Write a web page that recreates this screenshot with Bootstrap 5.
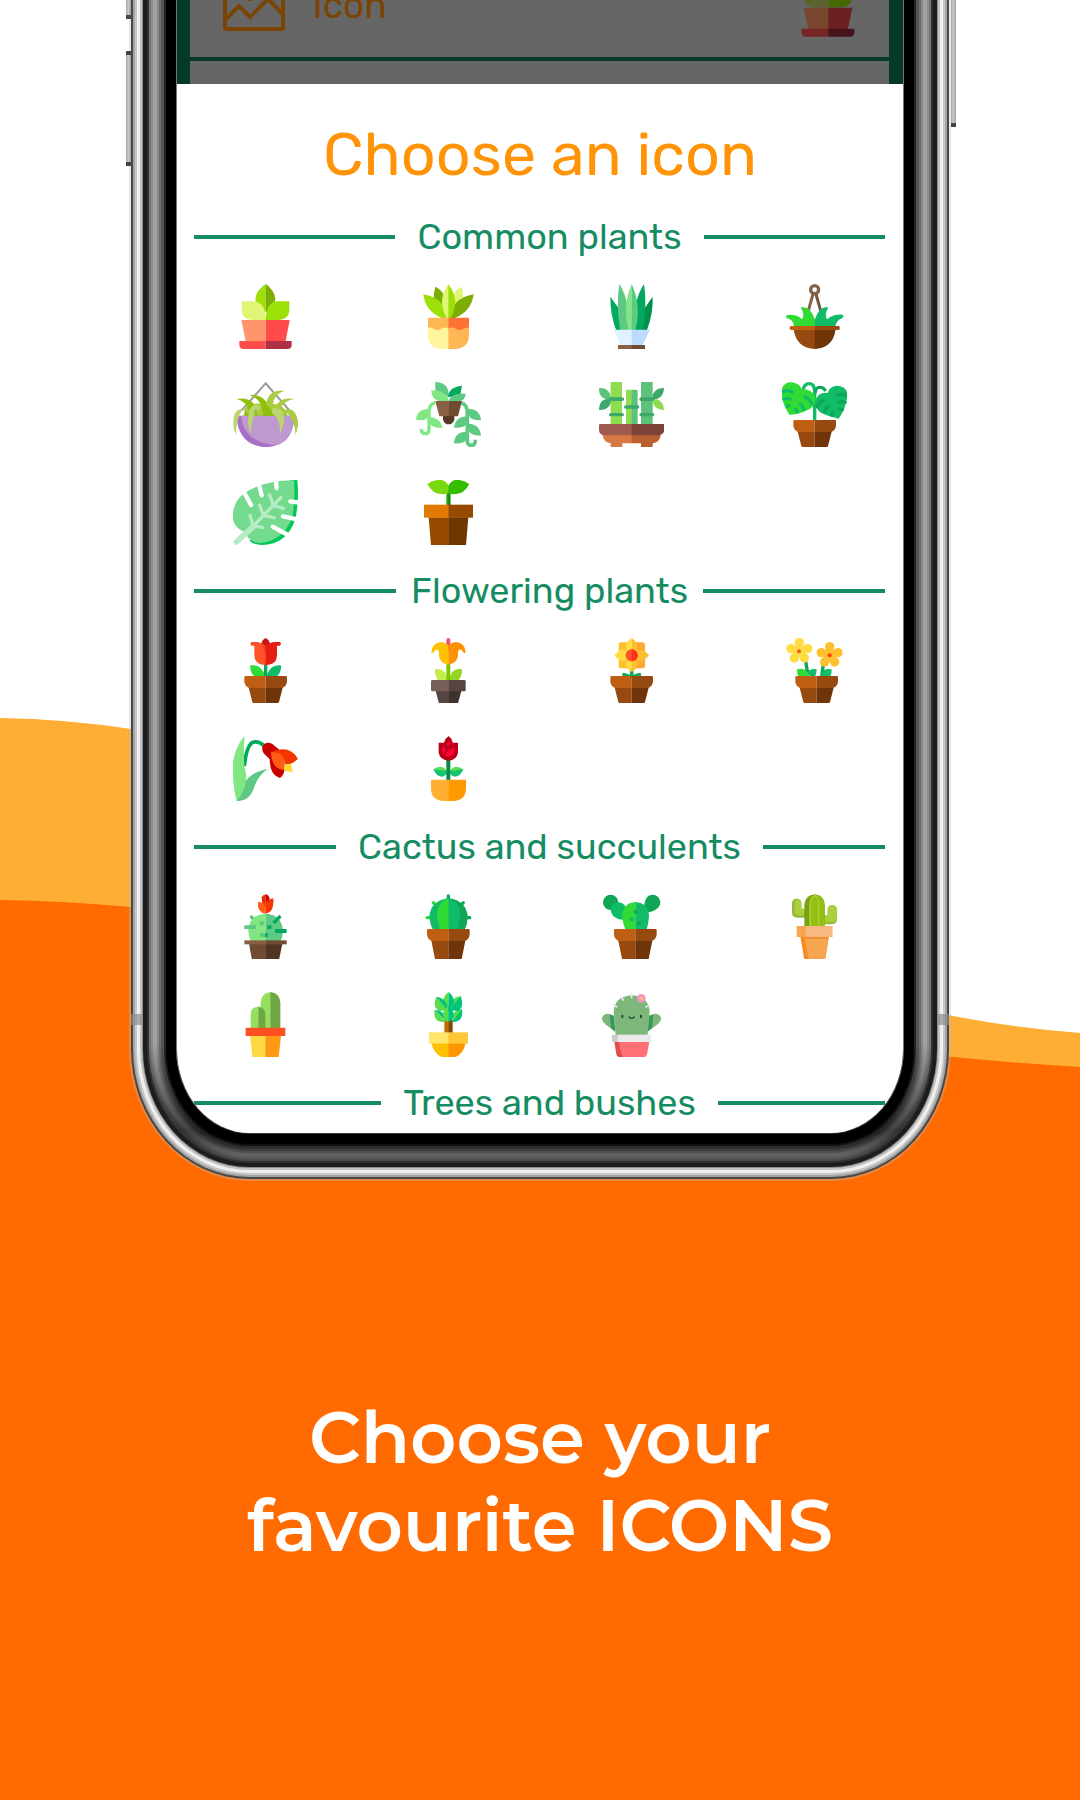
<!DOCTYPE html>
<html lang="en">
<head>
<meta charset="utf-8">
<meta name="viewport" content="width=device-width, initial-scale=1">
<title>Choose your favourite icons</title>
<link href="https://cdn.jsdelivr.net/npm/bootstrap@5.3.0/dist/css/bootstrap.min.css" rel="stylesheet">
<style>
  body { font-family: Rubik, Roboto, "Liberation Sans", sans-serif; background: #fff; }
  .promo { min-height: 1800px; overflow: hidden; }
  .waves { top: 0; left: 0; width: 100%; height: 1200px; z-index: 0; }
  .promo-floor { top: 1199px; bottom: 0; left: 0; right: 0; background: #ff6b00; z-index: 0; }
  .phone {
    width: 67.3%; border-radius: 0 0 72px 72px / 0 0 84px 84px; z-index: 1;
    box-shadow: 0 0 0 1px #777, 0 0 0 11px #000, 0 0 0 13px #222, 0 0 0 16px #555, 0 0 0 18px #6e6e6e,
      0 0 0 20px #888, 0 0 0 24px #a2a2a2, 0 0 0 26px #8c8c8c, 0 0 0 28px #777, 0 0 0 30px #303030,
      0 0 0 34px #1d1d1d, 0 0 0 35px #8c8c8c, 0 0 0 37px #c4c4c4, 0 0 0 40px #f0f0f0,
      0 0 0 42px #c8c8c8, 0 0 0 44px #a4a4a4, 0 0 0 46px #484848, 0 0 0 48px rgba(190,190,190,.35);
  }
  /* shade on the lower curve of the case */
  .phone::after {
    content: ""; position: absolute; z-index: -1; left: -28px; right: -28px; bottom: -28px; height: 120px;
    border-radius: 0 0 100px 100px / 0 0 112px 112px;
    background: linear-gradient(rgba(0,0,0,0), rgba(0,0,0,.6) 75%, rgba(0,0,0,.35));
  }
  .phone-screen { border-radius: inherit; background: #fff; overflow: hidden; }
  .side-key { width: 5px; background: linear-gradient(90deg, #a8a8a8, #c9c9c9 50%, #9a9a9a); border-bottom: 4px solid #444; top: 0; }
  .key-mute { left: -51px; height: 19px; }
  .key-volume { left: -51px; height: 115px; top: 51px; border-top: 4px solid #444; }
  .key-power { right: -53px; height: 127px; }
  .antenna { width: 12px; height: 11px; top: 1014px; background: rgba(140,140,140,.7); }
  .antenna-left { left: -46px; }
  .antenna-right { right: -46px; }
  .backdrop-page { height: 84px; background: #666; border-left: 13px solid #053a2a; border-right: 14px solid #053a2a; }
  .field-row { height: 61px; border-bottom: 4px solid #053a2a; padding: 0 33px 20px; }
  .field-image { margin-bottom: 6px; }
  .field-name { color: #7a4503; font-size: 37px; line-height: 36px; padding-bottom: 14px; }
  .next-row { height: 23px; }
  .sheet { padding: 34px 0 8px; }
  .sheet-title { color: #ff9408; font-size: 61px; line-height: 72px; font-weight: 400; margin-bottom: 25px; }
  .group-head { padding: 0 18px 0 17px; }
  .group-head::before, .group-head::after { content: ""; height: 4px; background: #168c62; flex: 1 1 20px; }
  .group-head::after { flex-basis: 0; }
  .group-name { color: #168c62; font-size: 36px; line-height: 44px; font-weight: 400; padding: 0 22px; }
  .group-name-snug { padding: 0 15px; }
  .icon-row { --bs-gutter-x: 4px; padding: 8px 0; }
  .icon-cell { height: 98px; }
  .icon-cell .btn { line-height: 0; }
  .icon-cell svg { width: 65px; height: 65px; }
  .slogan { padding: 260px 24px 0; z-index: 1; }
  .slogan h2 { font-family: Montserrat, Inter, "Open Sans", sans-serif; font-weight: 600; color: #fff; font-size: 72px; line-height: 88px; }
</style>
</head>
<body>
<svg width="0" height="0" class="position-absolute" aria-hidden="true">
  <defs>
    <g id="clay">
      <path fill="#964a0f" d="M-51 35H0V81H-36Q-39 81-40 78Z"/><path fill="#6f3509" d="M51 35H0V81H36Q39 81 40 78Z"/>
      <path fill="#bf5f13" d="M-64 4Q-64 0-60 0H0V36H-50Q-64 30-64 16Z"/><path fill="#964a0f" d="M64 4Q64 0 60 0H0V36H50Q64 30 64 16Z"/>
    </g>
    <g id="clay-tall">
      <path fill="#964a0f" d="M-51 35H0V93H-36Q-39 93-40 90Z"/><path fill="#6f3509" d="M51 35H0V93H36Q39 93 40 90Z"/>
      <path fill="#bf5f13" d="M-64 4Q-64 0-60 0H0V36H-50Q-64 30-64 16Z"/><path fill="#964a0f" d="M64 4Q64 0 60 0H0V36H50Q64 30 64 16Z"/>
    </g>
    <g id="bloom"><circle cx="0" cy="-25" r="14"/><circle cx="25" cy="-7" r="14"/><circle cx="15" cy="21" r="14"/><circle cx="-15" cy="21" r="14"/><circle cx="-25" cy="-7" r="14"/><circle r="20"/></g>
  </defs>
</svg>
<main class="promo position-relative">
  <svg class="waves position-absolute" viewBox="0 0 1080 1200" preserveAspectRatio="none" aria-hidden="true">
    <path fill="#ffae35" d="M0 718Q66 719 131 729C420 770 640 950 953 1016Q1015 1028 1080 1033V1200H0Z"/>
    <path fill="#ff6b00" d="M0 900Q66 901 131 907C420 930 640 1020 953 1057Q1015 1063 1080 1067V1200H0Z"/>
  </svg>
  <div class="promo-floor position-absolute"></div>

  <section class="phone position-relative mx-auto">
    <span class="side-key key-mute position-absolute"></span>
    <span class="side-key key-volume position-absolute"></span>
    <span class="side-key key-power position-absolute"></span>
    <span class="antenna antenna-left position-absolute"></span>
    <span class="antenna antenna-right position-absolute"></span>
    <div class="phone-screen">
      <div class="backdrop-page d-flex flex-column justify-content-end overflow-hidden">
        <div class="field-row d-flex align-items-end flex-shrink-0">
          <svg class="field-image flex-shrink-0" width="62" height="62" viewBox="0 0 62 62" fill="none" stroke="#7a4503" stroke-width="4" aria-hidden="true"><rect x="2" y="2" width="58" height="58" rx="1"/><path d="M2 51L16 37L27 48L45 30L60 45"/><circle cx="27" cy="25" r="5"/></svg>
          <span class="field-name ps-4 ms-1 me-auto">Icon</span>
          <svg class="flex-shrink-0" width="56" height="66" viewBox="172 42 167 195" aria-hidden="true"><path fill="#3f5903" d="M256 42Q225 62 225 90L240 125H256Z"/><path fill="#314502" d="M256 42Q285 62 285 90L272 125H256Z"/><path fill="#5a622e" d="M184 94H222Q256 98 256 150H215Q184 148 184 118Z"/><path fill="#456803" d="M327 94H290Q256 98 256 150H296Q327 148 327 118Z"/><path fill="#78452f" d="M183 151H256V214H197Z"/><path fill="#6c2022" d="M328 151H256V214H315Z"/><path fill="#762424" d="M177 213H256V237H190Q177 237 177 226Z"/><path fill="#48141c" d="M334 213H256V237H321Q334 237 334 226Z"/></svg>
        </div>
        <div class="next-row flex-shrink-0"></div>
      </div>

      <div class="sheet">
        <h1 class="sheet-title text-center">Choose an icon</h1>

        <div class="group-head d-flex align-items-center"><h2 class="group-name m-0">Common plants</h2></div>
        <div class="row icon-row">
          <div class="col-3 icon-cell d-flex align-items-center justify-content-center"><button type="button" class="btn p-0 border-0" aria-label="Potted succulent">
            <svg viewBox="158 42 195 195"><path fill="#9ddf08" d="M256 42Q225 62 225 90L240 125H256Z"/><path fill="#7bad04" d="M256 42Q285 62 285 90L272 125H256Z"/><path fill="#e0f573" d="M184 94H222Q256 98 256 150H215Q184 148 184 118Z"/><path fill="#9ddf08" d="M327 94H290Q256 98 256 150H296Q327 148 327 118Z"/><path fill="#ff946d" d="M183 150H256V214H196Z"/><path fill="#ff4b4b" d="M328 150H256V214H316Z"/><path fill="#ff4b4b" d="M177 213H256V237H190Q177 237 177 224Z"/><path fill="#b03044" d="M334 213H256V237H321Q334 237 334 224Z"/></svg></button></div>
          <div class="col-3 icon-cell d-flex align-items-center justify-content-center"><button type="button" class="btn p-0 border-0" aria-label="Agave in a pot">
            <svg viewBox="708 42 195 195"><path fill="#7bad04" d="M766 50Q792 62 796 90L784 105L762 88Q760 68 766 50Z"/><path fill="#e0f573" d="M845 50Q820 62 815 90L828 105L849 80Q850 64 845 50Z"/><path fill="#9ddf08" d="M730 73Q798 86 802 144H785Q736 124 730 73Z"/><path fill="#7bad04" d="M881 73Q814 86 808 144H825Q874 124 881 73Z"/><path fill="#e0f573" d="M805 42Q770 90 800 144H806Z"/><path fill="#9ddf08" d="M805 42Q842 90 812 144H805Z"/><path fill="#fff59e" d="M744 170H806V237H785Q744 234 744 194Z"/><path fill="#ffb655" d="M867 170H805V237H826Q867 234 867 194Z"/><path fill="#ffb655" d="M744 143H806V175Q796 170 787 175Q775 184 764 178Q756 172 744 172Z"/><path fill="#ff7236" d="M867 143H805V175Q815 170 824 175Q838 184 847 178Q856 172 867 173Z"/></svg></button></div>
          <div class="col-3 icon-cell d-flex align-items-center justify-content-center"><button type="button" class="btn p-0 border-0" aria-label="Snake plant">
            <svg viewBox="147 42 195 195"><path fill="#00a95e" d="M181 80L204 112L225 180H198Q180 130 181 80Z"/><path fill="#008f4c" d="M308 80L286 112L265 180H291Q310 130 308 80Z"/><path fill="#5dc983" d="M208 42Q240 90 236 180H210Q198 100 208 42Z"/><path fill="#00a95e" d="M282 42Q250 90 250 180H278Q292 100 282 42Z"/><path fill="#80e783" d="M245 42Q216 110 236 180H246Z"/><path fill="#5dc983" d="M245 42Q276 110 256 180H245Z"/><path fill="#e0f2ff" d="M191 179H246V226H212Z"/><path fill="#bbdbff" d="M300 179H245V226H277Z"/><path fill="#8a6044" d="M204 225H246V237H204Z"/><path fill="#6f4b31" d="M285 225H245V237H285Z"/></svg></button></div>
          <div class="col-3 icon-cell d-flex align-items-center justify-content-center"><button type="button" class="btn p-0 border-0" aria-label="Hanging fern bowl">
            <svg viewBox="697 42 195 195"><path fill="none" stroke="#86644a" stroke-width="9" d="M790 72L774 130"/><path fill="none" stroke="#72573a" stroke-width="9" d="M799 72L815 130"/><circle cx="795" cy="59" r="12" fill="none" stroke="#826047" stroke-width="10"/><path fill="#31da35" d="M712 135Q742 132 757 148Q766 132 754 114Q754 111 758 111Q786 112 796 150V170H734Q730 148 712 145Q706 140 712 135Z"/><path fill="#10bc67" d="M878 134Q850 132 832 148Q824 132 835 114Q835 111 831 111Q806 112 795 150V170H857Q860 150 878 144Q885 139 878 134Z"/><path fill="#964a0f" d="M732 178H796V237Q740 235 732 178Z"/><path fill="#6f3509" d="M858 178H795V237Q850 235 858 178Z"/><rect x="720" y="168" width="150" height="12" rx="5" fill="#bf5f13"/><path fill="#964a0f" d="M795 168H865Q870 168 870 174Q870 180 865 180H795Z"/></svg></button></div>
          <div class="col-3 icon-cell d-flex align-items-center justify-content-center"><button type="button" class="btn p-0 border-0" aria-label="Hanging spider plant">
            <svg viewBox="158 335 195 195"><path fill="none" stroke="#9b9b96" stroke-width="6" d="M183 421L256 339L328 421"/><path fill="#a9cc3d" d="M192 437V415Q205 398 240 400H270Q315 400 322 437Z"/><path fill="#a86fc4" d="M168 436H343Q338 525 256 531Q174 525 168 436Z"/><path fill="#bd99d0" d="M182 436H343Q338 515 285 525Q190 515 182 436Z"/><path fill="#8fbf0c" d="M169 386Q205 380 222 402L205 420Q200 395 169 386Z"/><path fill="#8fbf0c" d="M208 374Q250 370 266 408L282 437H248Q250 390 208 374Z"/><path fill="#aacb44" d="M312 361Q262 356 257 405L275 412Q280 370 312 361Z"/><path fill="#aacb44" d="M342 386Q300 378 284 410L298 418Q310 390 342 386Z"/><path fill="#bbd66f" d="M182 416Q154 420 160 474L167 494Q168 440 187 418Z"/><path fill="#bbd66f" d="M238 408Q204 390 203 460L211 493Q214 425 238 418Z"/><path fill="#bbd66f" d="M276 414Q312 405 312 455L299 491Q300 440 276 430Z"/><path fill="#aacb44" d="M318 416Q350 412 354 462L346 494Q342 440 314 424Z"/><path fill="#93c01f" d="M222 437Q220 418 228 416L232 437ZM190 437L196 418L205 437Z"/></svg></button></div>
          <div class="col-3 icon-cell d-flex align-items-center justify-content-center"><button type="button" class="btn p-0 border-0" aria-label="Trailing vine">
            <svg viewBox="708 335 195 195"><path fill="#5dc983" d="M766 335Q806 336 806 375L790 392L766 360Z"/><path fill="#00a95e" d="M846 346Q806 350 804 380L840 378Z"/><path fill="#80e783" d="M754 360Q800 360 806 392H778Q754 388 754 360Z"/><path fill="#5dc983" d="M857 370Q814 366 806 392H840Q856 388 857 370Z"/><path fill="none" stroke="#80e783" stroke-width="10" d="M766 397Q745 402 747 430V478Q747 490 736 490Q724 490 724 476"/><path fill="#80e783" d="M708 449Q710 416 747 416Q747 449 730 450ZM746 440Q780 440 788 473Q750 475 746 450Z"/><path fill="none" stroke="#5dc983" stroke-width="11" d="M844 398Q864 402 862 435V512Q862 525 874 525Q886 525 886 508"/><path fill="#5dc983" d="M866 416Q900 416 903 450Q866 450 866 430ZM822 472Q826 439 862 438V460Q850 474 822 472ZM866 460Q900 462 903 496Q866 494 866 478ZM822 519Q824 484 860 484V508Q845 522 822 519Z"/><path fill="#553825" d="M789 436H823V448Q818 462 806 462Q794 462 789 448Z"/><path fill="#8a6044" d="M766 392H806V438H778Z"/><path fill="#6f4b31" d="M846 392H805V438H834Z"/></svg></button></div>
          <div class="col-3 icon-cell d-flex align-items-center justify-content-center"><button type="button" class="btn p-0 border-0" aria-label="Lucky bamboo">
            <svg viewBox="147 335 195 195"><path fill="#5cc27b" d="M148 353Q180 350 184 388Q148 388 147 358Q147 353 148 353Z"/><path fill="#3ca86c" d="M147 419Q148 382 184 386Q182 420 147 419ZM342 353Q308 352 306 388Q340 388 342 353Z"/><path fill="#8edc50" d="M342 419Q340 384 306 386Q310 420 342 419Z"/><rect x="182" y="334" width="34" height="130" rx="4" fill="#8edc50"/><rect x="273" y="334" width="35" height="130" rx="4" fill="#5cc27b"/><path fill="#8edc50" d="M228 461V362Q228 358 232 358H246V464Z"/><path fill="#5cc27b" d="M263 461V362Q263 358 259 358H245V464Z"/><g fill="#3ca86c"><rect x="177" y="381" width="45" height="11" rx="5"/><rect x="177" y="428" width="45" height="10" rx="5"/><rect x="222" y="405" width="46" height="10" rx="5"/><rect x="268" y="381" width="45" height="11" rx="5"/><rect x="268" y="428" width="45" height="10" rx="5"/></g><path fill="#d87943" d="M158 494H246V519H217V530H182V519Q160 516 158 494Z"/><path fill="#b96031" d="M332 494H245V519H273V530H308V519Q330 516 332 494Z"/><path fill="#9f5b50" d="M147 465Q147 461 151 461H246V495H162Q147 492 147 478Z"/><path fill="#7d4338" d="M343 465Q343 461 339 461H245V495H328Q343 492 343 478Z"/></svg></button></div>
          <div class="col-3 icon-cell d-flex align-items-center justify-content-center"><button type="button" class="btn p-0 border-0" aria-label="Potted monstera">
            <svg viewBox="697 335 195 195"><path fill="none" stroke="#10bc67" stroke-width="10" d="M795 450V362Q794 340 778 340Q765 340 760 358"/><path fill="none" stroke="#0fa656" stroke-width="9" d="M797 368Q798 351 810 351Q822 351 828 362"/><path fill="#31da35" d="M720 434Q690 390 698 352Q706 334 728 336Q750 340 756 356Q790 356 797 382Q800 404 780 416Q750 432 720 434Z"/><path fill="none" stroke="#10bc67" stroke-width="10" stroke-linecap="round" d="M702 363Q716 358 727 365M703 386Q712 382 721 386M712 408L718 406M767 380Q780 386 786 399M753 402Q760 408 762 418M739 418L742 425"/><path fill="#10bc67" d="M867 445Q892 410 893 370Q888 346 862 346Q838 348 834 368Q806 364 796 392Q796 416 815 428Q840 440 867 445Z"/><path fill="none" stroke="#0fa656" stroke-width="10" stroke-linecap="round" d="M864 375Q877 367 888 375M868 397Q877 392 886 396M871 417L878 418M803 408Q806 397 820 391M825 425Q826 413 836 409M847 435L850 427"/><use href="#clay" x="795" y="449"/></svg></button></div>
          <div class="col-3 icon-cell d-flex align-items-center justify-content-center"><button type="button" class="btn p-0 border-0" aria-label="Monstera leaf">
            <svg viewBox="158 628 195 195"><path fill="#00c95a" d="M330 628H351Q357 690 345 745Q320 822 245 823Q218 822 208 810Z"/><path fill="#74db8e" d="M186 780Q152 765 158 724Q164 690 186 672Q240 630 341 629Q345 690 336 738Q310 812 235 817Q208 812 200 795Z"/><path fill="none" stroke="#fff" stroke-width="13" stroke-linecap="round" d="M194 670L212 703M236 642L244 674M286 624L289 653M357 696L330 692M350 746L308 737M323 793L277 768"/><path fill="none" stroke="#b5ecc3" stroke-width="17" stroke-linecap="round" d="M168 814L222 764"/><path fill="none" stroke="#b5ecc3" stroke-width="10" stroke-linecap="round" d="M215 770L302 680M209 734L218 765L247 771M238 704L249 734L281 741M268 673L279 704L309 713"/></svg></button></div>
          <div class="col-3 icon-cell d-flex align-items-center justify-content-center"><button type="button" class="btn p-0 border-0" aria-label="Seedling">
            <svg viewBox="708 628 195 195"><path fill="#1fae08" d="M799 660H811V706H799Z"/><path fill="#108b00" d="M805 668H811V706H805Z"/><path fill="#7ad80f" d="M742 640Q790 612 806 646V668Q762 680 742 640Z"/><path fill="#35bd00" d="M868 640Q820 612 805 646V668Q848 680 868 640Z"/><path fill="#964a00" d="M746 740H806V824H753Z"/><path fill="#703600" d="M865 740H805V824H858Z"/><path fill="#e27900" d="M732 702H806V741H732Z"/><path fill="#964a00" d="M879 702H805V741H879Z"/></svg></button></div>
        </div>

        <div class="group-head d-flex align-items-center"><h2 class="group-name group-name-snug m-0">Flowering plants</h2></div>
        <div class="row icon-row">
          <div class="col-3 icon-cell d-flex align-items-center justify-content-center"><button type="button" class="btn p-0 border-0" aria-label="Potted tulip">
            <svg viewBox="158 54 195 195"><path fill="#31da35" d="M210 136Q245 132 254 169H222Q208 156 210 136Z"/><path fill="#10bc67" d="M302 136Q268 132 259 169H290Q304 156 302 136Z"/><path fill="#0fa656" d="M251 130H261V169H251Z"/><path fill="#c41a13" d="M242 74Q246 58 256 54Q266 58 270 74V90H242Z"/><path fill="#ff5328" d="M213 66H228Q244 67 256 78V135Q222 134 222 104V77H214Q207 72 213 66Z"/><path fill="#ff3b22" d="M242 71Q252 74 256 82V135L251 134Q260 96 242 71Z"/><path fill="#e71d14" d="M299 66H284Q266 67 256 78V135Q290 134 290 104V77H298Q305 72 299 66Z"/><use href="#clay" x="256" y="168"/></svg></button></div>
          <div class="col-3 icon-cell d-flex align-items-center justify-content-center"><button type="button" class="btn p-0 border-0" aria-label="Potted lily">
            <svg viewBox="708 54 195 195"><path fill="#c6ed48" d="M765 148Q798 142 802 181H774Q764 166 765 148Z"/><path fill="#95d524" d="M846 148Q812 142 808 181H836Q847 166 846 148Z"/><path fill="#78c900" d="M799 130H811V181H799Z"/><rect x="799" y="54" width="12" height="35" rx="6" fill="#ff4d6c"/><path fill="#ffc000" d="M805 76Q790 66 782 66Q754 70 754 98Q760 102 766 90Q774 86 777 96V108Q780 130 805 134Z"/><path fill="#ff9200" d="M805 76Q820 66 829 66Q857 70 857 98Q850 102 845 90Q837 86 834 96V108Q831 130 805 134Z"/><path fill="#554440" d="M767 213H806V250H777Z"/><path fill="#3e312e" d="M844 213H805V250H834Z"/><path fill="#75605a" d="M753 184Q753 180 757 180H806V214H757Q753 214 753 210Z"/><path fill="#554440" d="M857 184Q857 180 853 180H805V214H853Q857 214 857 210Z"/></svg></button></div>
          <div class="col-3 icon-cell d-flex align-items-center justify-content-center"><button type="button" class="btn p-0 border-0" aria-label="Potted daisy">
            <svg viewBox="147 54 195 195"><path fill="none" stroke="#0fa656" stroke-width="11" stroke-linecap="round" d="M245 150V170M222 164L236 169M268 164L254 169"/><g fill="#ffc02e"><rect x="206" y="67" width="36" height="36" rx="8"/><rect x="206" y="109" width="36" height="36" rx="8"/></g><g fill="#ffa834"><rect x="249" y="67" width="36" height="36" rx="8"/><rect x="249" y="109" width="36" height="36" rx="8"/></g><path fill="#ffdc3f" d="M245 54Q228 65 228 82L234 104H246ZM193 106Q205 89 222 89L246 100V112L222 123Q205 122 193 106ZM245 157Q228 146 228 128L246 110Z"/><path fill="#ffc02e" d="M245 54Q262 65 262 82L256 104H245ZM297 106Q285 89 268 89L245 100V112L268 123Q285 122 297 106ZM245 157Q262 146 262 128L245 110Z"/><circle cx="245" cy="106" r="18" fill="#ff5328"/><path fill="#ff2f19" d="M245 88A18 18 0 0 1 245 124Z"/><use href="#clay" x="245" y="168"/></svg></button></div>
          <div class="col-3 icon-cell d-flex align-items-center justify-content-center"><button type="button" class="btn p-0 border-0" aria-label="Potted buttercups">
            <svg viewBox="697 54 195 195"><path fill="none" stroke="#0fa656" stroke-width="10" d="M768 124L775 166M822 128L816 168"/><path fill="#31da35" d="M742 148Q772 140 778 169H746Q741 160 742 148Z"/><path fill="#10bc67" d="M801 148Q780 144 774 158L781 169H796Q802 160 801 148ZM846 148Q816 142 814 169H842Q847 160 846 148Z"/><use href="#bloom" x="749" y="93" fill="#ffdc3f"/><use href="#bloom" x="840" y="105" fill="#ffc02e"/><circle cx="748" cy="94" r="6" fill="#ff5328"/><circle cx="840" cy="106" r="6" fill="#fb3a17"/><use href="#clay" x="801" y="168"/></svg></button></div>
          <div class="col-3 icon-cell d-flex align-items-center justify-content-center"><button type="button" class="btn p-0 border-0" aria-label="Fritillary">
            <svg viewBox="158 348 195 195"><path fill="none" stroke="#00a95e" stroke-width="11" d="M192 438Q198 380 215 368Q232 360 250 376"/><path fill="#80e783" d="M192 348Q150 400 158 470Q160 510 169 543Q200 530 197 460Q190 440 191 400Z"/><path fill="#5dc983" d="M263 446Q215 455 197 482Q194 515 169 543Q210 545 224 495Q235 465 263 446Z"/><path fill="#c80000" d="M246 380Q256 362 276 372L298 390L300 425L314 440Q312 465 299 474Q268 465 268 418L250 400Q244 390 246 380Z"/><path fill="#f53500" d="M276 394Q330 374 353 417L336 430L316 434Q308 402 276 394Z"/><path fill="#ff5d17" d="M272 396Q312 394 314 432V450Q274 450 272 396Z"/><path fill="#ffd62e" d="M312 434L332 431L337 456L311 452Z"/></svg></button></div>
          <div class="col-3 icon-cell d-flex align-items-center justify-content-center"><button type="button" class="btn p-0 border-0" aria-label="Rose in a bowl">
            <svg viewBox="708 348 195 195"><path fill="#5fdc55" d="M760 448Q785 430 802 454L790 462ZM850 448Q825 430 808 454L820 462Z"/><path fill="#10c472" d="M760 448L802 454Q798 470 784 470Q770 470 760 448ZM850 448L808 454Q812 470 826 470Q840 470 850 448Z"/><path fill="#008d42" d="M799 418H811V480H799Z"/><path fill="#bd0019" d="M776 368H792Q795 355 806 348Q816 355 818 368H834V398Q830 420 806 422Q780 420 776 398Z"/><path fill="#ff003c" d="M806 361L812 373Q808 380 799 374ZM787 381Q800 384 797 393L788 404ZM825 382Q826 407 801 411Q796 407 798 402Q804 388 825 382Z"/><path fill="#ffaf32" d="M753 479H806V543H788Q753 540 753 505Z"/><path fill="#ff9900" d="M858 479H805V543H823Q858 540 858 505Z"/></svg></button></div>
        </div>

        <div class="group-head d-flex align-items-center"><h2 class="group-name m-0">Cactus and succulents</h2></div>
        <div class="row icon-row">
          <div class="col-3 icon-cell d-flex align-items-center justify-content-center"><button type="button" class="btn p-0 border-0" aria-label="Flowering round cactus">
            <svg viewBox="158 42 195 195"><path fill="#80e783" d="M256 101Q204 104 204 155Q205 172 212 184H256Z"/><path fill="#5dc983" d="M256 101Q306 104 308 155Q307 172 300 184H255Z"/><g fill="#5dc983"><path d="M192 136H227V147H192ZM238 124H250V136H238ZM238 159H256V171H238ZM207 112L214 104L222 113L215 120Z"/></g><g fill="#00a95e"><path d="M255 159H262V171H255ZM261 136H273V147H261ZM284 147H319V159H284ZM276 125L297 104L304 112L284 132Z"/></g><path fill="#e62c00" d="M244 52Q248 44 256 43V76L245 64Z"/><path fill="#c80000" d="M256 43Q266 45 268 56L256 72Z"/><path fill="#ff5d17" d="M233 66Q250 66 256 80V101Q230 98 233 66Z"/><path fill="#f53500" d="M279 55Q258 57 256 74V101Q282 98 279 55ZM245 60L256 74V82Q252 72 245 69Z"/><path fill="#6f4b31" d="M206 191H256V240H215Z"/><path fill="#513523" d="M306 191H255V240H296Z"/><path fill="#8a6044" d="M192 181H256V193H192Z"/><path fill="#6f4b31" d="M319 181H255V193H319Z"/></svg></button></div>
          <div class="col-3 icon-cell d-flex align-items-center justify-content-center"><button type="button" class="btn p-0 border-0" aria-label="Barrel cactus">
            <svg viewBox="708 42 195 195"><path fill="none" stroke="#31da35" stroke-width="10" stroke-linecap="round" d="M741 113H752M760 68L768 76"/><path fill="none" stroke="#0fa656" stroke-width="10" stroke-linecap="round" d="M805 48V60M850 68L842 76M869 113H858"/><path fill="#10bc67" d="M805 55Q752 62 748 110Q750 132 758 148H854Q862 132 863 110Q858 62 805 55Z"/><path fill="#31da35" d="M805 55Q770 68 771 110L779 148H806Z"/><path fill="#0fa656" d="M805 55Q845 68 840 112L834 148H854Q862 132 863 110Q858 62 805 55Z"/><use href="#clay-tall" x="805" y="147"/></svg></button></div>
          <div class="col-3 icon-cell d-flex align-items-center justify-content-center"><button type="button" class="btn p-0 border-0" aria-label="Prickly pear">
            <svg viewBox="147 42 195 195"><circle cx="182" cy="67" r="23" fill="#0fa656"/><circle cx="308" cy="67" r="23" fill="#0fa656"/><path fill="#0fa656" d="M286 62L330 72Q320 94 294 97L280 84Z"/><path fill="#10bc67" d="M182 88Q186 68 205 67Q222 68 228 84L222 120Q184 118 182 88Z"/><path fill="#31da35" d="M256 66Q218 70 216 108Q218 130 226 148H257Z"/><path fill="#10bc67" d="M256 66Q296 70 297 108Q296 130 290 148H256Z"/><circle cx="257" cy="96" r="6" fill="#0fa656"/><circle cx="245" cy="118" r="6" fill="#10bc67"/><circle cx="267" cy="130" r="6" fill="#0fa656"/><use href="#clay-tall" x="256" y="147"/></svg></button></div>
          <div class="col-3 icon-cell d-flex align-items-center justify-content-center"><button type="button" class="btn p-0 border-0" aria-label="Saguaro cactus">
            <svg viewBox="697 42 195 195"><path fill="#97b93c" d="M727 70Q727 56 741 56Q755 56 755 70V86H766V113H742Q727 112 727 98Z"/><path fill="#abcf3e" d="M735 64Q739 58 746 58Q755 60 755 70V86H766V106H748Q736 104 735 96Z"/><path fill="#97b93c" d="M862 90Q862 76 848 76Q834 76 834 90V106H823V133H847Q862 132 862 118Z"/><path fill="#abcf3e" d="M862 90Q862 76 848 76Q834 76 834 90V106H823V126H844Q860 124 862 112Z"/><path fill="#77a312" d="M764 140V74Q766 46 795 43Q824 46 825 74V140Z"/><path fill="#93c010" d="M778 140V74Q780 46 798 44Q824 48 825 74V140Z"/><path fill="none" stroke="#abcf3e" stroke-width="4" d="M782 138V76Q783 50 795 46Q806 50 807 76V138"/><path fill="#f48b26" d="M752 170H838L826 240H764Z"/><path fill="#f6a550" d="M765 176H836L826 240H778Z"/><path fill="#f6a550" d="M741 138H848V171H741Z"/><path fill="#f8b981" d="M768 138H848V171H768Z"/></svg></button></div>
          <div class="col-3 icon-cell d-flex align-items-center justify-content-center"><button type="button" class="btn p-0 border-0" aria-label="Column cactus">
            <svg viewBox="158 337 195 195"><path fill="#96df5c" d="M241 446V368Q243 340 271 337V446Z"/><path fill="#6fa744" d="M300 446V368Q298 340 270 337V446Z"/><path fill="#96df5c" d="M211 446V402Q213 382 235 381V446Z"/><path fill="#6fa744" d="M255 446V402Q253 382 234 381V446Z"/><path fill="#ffd944" d="M209 468H256V533H216Z"/><path fill="#ff9812" d="M302 468H255V533H295Z"/><path fill="#ff5023" d="M196 444H315V469H196Z"/></svg></button></div>
          <div class="col-3 icon-cell d-flex align-items-center justify-content-center"><button type="button" class="btn p-0 border-0" aria-label="Rubber tree">
            <svg viewBox="708 337 195 195"><path fill="#c56b00" d="M793 420H806V460H793Z"/><path fill="#874600" d="M818 420H805V460H818Z"/><path fill="#57dc4c" d="M806 337Q790 348 788 368L806 396ZM769 351Q756 382 778 394L803 392ZM764 390Q758 428 792 427H798ZM842 349Q812 354 806 384L812 394ZM846 388Q818 394 814 412L822 427Z"/><path fill="#00c47b" d="M806 337Q821 348 823 368L805 396ZM769 351Q802 356 804 394ZM764 390Q796 392 800 427ZM842 349Q854 384 834 394L808 392ZM846 388Q852 428 816 427Z"/><path fill="#57dc4c" d="M805 378Q785 395 790 410Q794 424 806 427Z"/><path fill="#00c47b" d="M805 378Q824 395 821 410Q816 424 805 427Z"/><path fill="#ffc000" d="M754 490H806V533H788Q762 524 754 490Z"/><path fill="#ff9700" d="M857 490H805V533H824Q850 524 857 490Z"/><path fill="#ffe668" d="M747 458H806V492H747Z"/><path fill="#ffc738" d="M864 458H805V492H864Z"/></svg></button></div>
          <div class="col-3 icon-cell d-flex align-items-center justify-content-center"><button type="button" class="btn p-0 border-0" aria-label="Smiling cactus">
            <svg viewBox="147 337 195 195"><path fill="#7db87a" d="M196 456L165 433Q154 424 156 414Q162 400 178 403L190 410ZM292 456L324 433Q335 424 333 414Q327 400 311 403L299 410Z"/><path fill="#379761" d="M179 404L192 408L196 456L183 446ZM310 404L297 408L292 456L306 446Z"/><path fill="#7db87a" d="M197 466L191 396Q194 350 245 347Q296 350 299 396L293 466Z"/><path fill="none" stroke="#ebebeb" stroke-width="5" stroke-linecap="round" d="M245 340V354M213 351L220 361M189 376L201 382M300 376L288 382"/><circle cx="274" cy="356" r="13" fill="#f895c4"/><circle cx="274" cy="356" r="5" fill="#ffc66b"/><path fill="none" stroke="#31473d" stroke-width="6" stroke-linecap="round" d="M217 408V413M273 408V413"/><path fill="none" stroke="#31473d" stroke-width="4" stroke-linecap="round" d="M237 412Q245 420 253 412"/><path fill="#e04d50" d="M193 486H280L260 533H210Q201 532 199 524Z"/><path fill="#ff6f75" d="M207 486H298L291 524Q288 533 280 533H222Q212 526 207 486Z"/><rect x="186" y="465" width="117" height="22" rx="4" fill="#cbcbcb"/><path fill="#ebebeb" d="M203 465H299Q303 465 303 469V483Q303 487 299 487H203Z"/></svg></button></div>
        </div>

        <div class="group-head d-flex align-items-center"><h2 class="group-name m-0">Trees and bushes</h2></div>
      </div>
    </div>
  </section>

  <section class="slogan position-relative text-center">
    <h2 class="m-0">Choose your<br>favourite ICONS</h2>
  </section>
</main>
<script src="https://cdn.jsdelivr.net/npm/bootstrap@5.3.0/dist/js/bootstrap.bundle.min.js"></script>
</body>
</html>
